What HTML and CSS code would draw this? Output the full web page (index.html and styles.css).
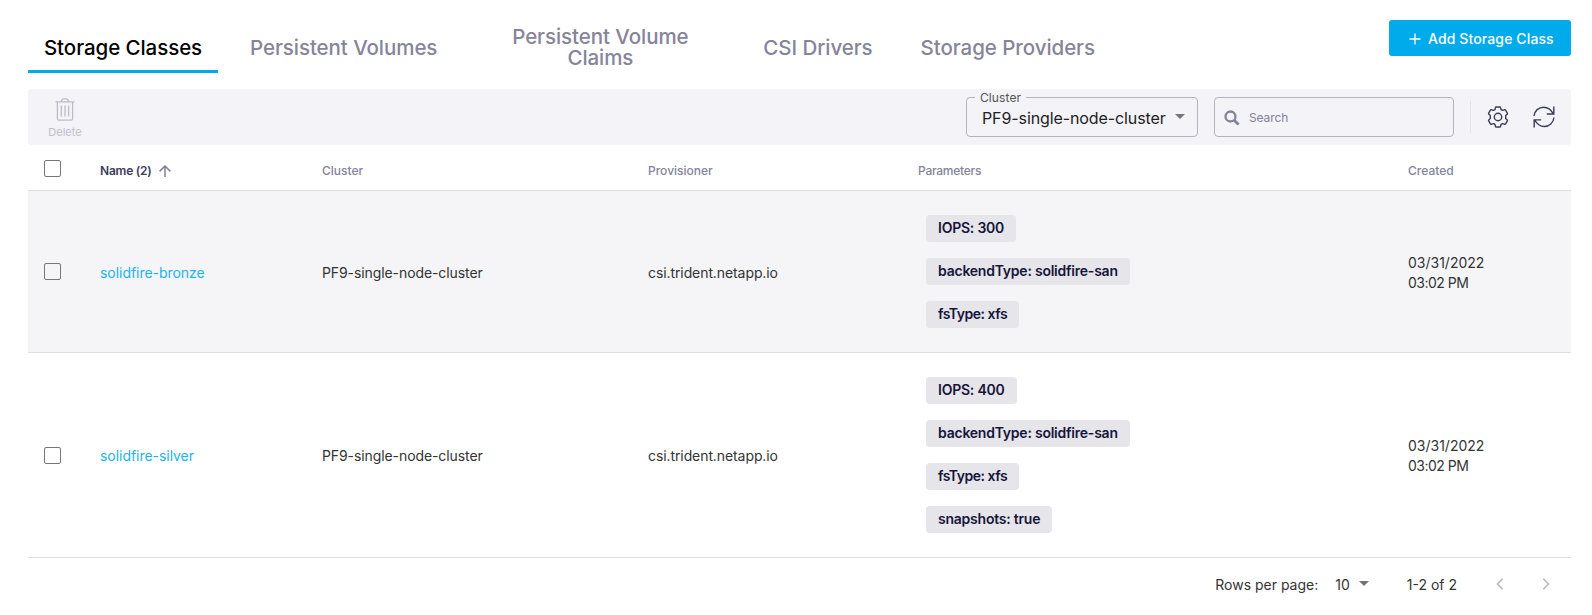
FILE: index.html
```html
<!DOCTYPE html>
<html lang="en">
<head>
<meta charset="utf-8">
<title>Storage Classes</title>
<link rel="stylesheet" href="styles.css">
</head>
<body>
<main class="page">
  <header class="top">
    <nav class="tabs">
      <a class="tab tab-active"><span>Storage Classes</span></a>
      <a class="tab"><span>Persistent Volumes</span></a>
      <a class="tab tab-wide"><span>Persistent Volume Claims</span></a>
      <a class="tab"><span>CSI Drivers</span></a>
      <a class="tab"><span>Storage Providers</span></a>
    </nav>
    <button class="add">
      <svg width="12" height="12" viewBox="0 0 12 12"><path d="M6 .5v11M.5 6h11" stroke="#fff" stroke-width="1.3" fill="none"/></svg>
      <span>Add Storage Class</span>
    </button>
  </header>

  <section class="toolbar">
    <div class="delete">
      <svg width="20" height="23" viewBox="0 0 20 23" fill="none" stroke="#bdbcc8" stroke-width="1.3"><path d="M.5 3.9h19M2.4 4v16.8q0 1.4 1.4 1.4h12.4q1.4 0 1.4-1.4V4M6 3.8l1.4-2.4Q7.8.8 8.5.8h3q.7 0 1.1.6L14 3.800M6.3 7.5v11M10 7.5v11M13.7 7.5v11"/></svg>
      <span>Delete</span>
    </div>
    <div class="tools">
      <fieldset class="select">
        <legend><span>Cluster</span></legend>
        <div class="select-value"><span>PF9-single-node-cluster</span><i class="caret"></i></div>
      </fieldset>
      <div class="search">
        <svg width="16" height="16" viewBox="0 0 16 16" fill="none" stroke="#84839a"><circle cx="6.5" cy="6.5" r="5" stroke-width="2.3"/><path d="M10.2 10.2l4.4 4.4" stroke-width="2.8"/></svg>
        <span>Search</span>
      </div>
      <div class="divider"></div>
      <svg class="gear" width="22" height="22" viewBox="0 0 22 22" fill="none" stroke="#3d3b5c" stroke-width="1.4" stroke-linejoin="round"><path d="M8.4 1.7Q8.5 1 9.300 1h3.400q.8 0 .9.7l.4 1.900 1.500.8 1.900-.6q.8-.2 1.200.4l1.700 2.900q.4.700-.2 1.200l-1.400 1.300v2.800l1.400 1.300q.6.500.2 1.200l-1.700 2.900q-.4.600-1.200.4l-1.900-.6-1.500.8-.4 1.900q-.1.700-.9.700H9.300q-.8 0-.9-.7L8 18.400l-1.500-.8-1.900.6q-.8.200-1.200-.4l-1.700-2.900q-.4-.7.200-1.200l1.400-1.300V9.600L1.900 8.300q-.6-.5-.2-1.200l1.700-2.900q.4-.6 1.200-.4l1.900.6L8 3.600z"/><circle cx="11" cy="11" r="3.700"/></svg>
      <svg class="refresh" width="22" height="22" viewBox="0 0 22 22" fill="none" stroke="#3d3b5c" stroke-width="1.4"><path d="M1 10C1.500 4.700 5.700 1.200 10.800 1.200c4.100 0 7.200 2.400 9.600 6.600M13.800 8h7V.5M21 11.500c-.6 5.200-4.700 9-9.800 9-4.100 0-7.200-2.300-9.500-6.500M8.200 13.900H1.200v7.600"/></svg>
    </div>
  </section>

  <section class="table">
    <div class="row head">
      <div><i class="check"></i></div>
      <div class="sorted"><span>Name (2)</span><svg width="12" height="12" viewBox="0 0 12 12" fill="none" stroke="#84839a" stroke-width="1.5"><path d="M6 12V1M.6 6.400L6 1l5.400 5.400"/></svg></div>
      <div>Cluster</div>
      <div>Provisioner</div>
      <div class="params">Parameters</div>
      <div>Created</div>
    </div>
    <div class="row shaded">
      <div><i class="check"></i></div>
      <div class="body-text"><a class="link">solidfire-bronze</a></div>
      <div class="body-text">PF9-single-node-cluster</div>
      <div class="body-text">csi.trident.netapp.io</div>
      <div class="chips"><span>IOPS: 300</span><span>backendType: solidfire-san</span><span class="tight">fsType: xfs</span></div>
      <div class="date">03/31/2022<br><span class="time">03:02 PM</span></div>
    </div>
    <div class="row">
      <div><i class="check"></i></div>
      <div class="body-text"><a class="link">solidfire-silver</a></div>
      <div class="body-text">PF9-single-node-cluster</div>
      <div class="body-text">csi.trident.netapp.io</div>
      <div class="chips"><span>IOPS: 400</span><span>backendType: solidfire-san</span><span class="tight">fsType: xfs</span><span>snapshots: true</span></div>
      <div class="date">03/31/2022<br><span class="time">03:02 PM</span></div>
    </div>
  </section>

  <footer class="pager">
    <span>Rows per page:</span>
    <span class="count">10</span><i class="caret"></i>
    <span class="range">1-2 of 2</span>
    <svg width="8" height="12" viewBox="0 0 8 12" fill="none" stroke="#b9b9b9" stroke-width="1.6"><path d="M6.700 .8L1.500 6l5.200 5.200"/></svg>
    <svg class="next" width="8" height="12" viewBox="0 0 8 12" fill="none" stroke="#b9b9b9" stroke-width="1.6"><path d="M1.300 .8L6.500 6l-5.200 5.200"/></svg>
  </footer>
</main>
</body>
</html>
```
FILE: styles.css
```css
* { box-sizing: border-box; }
body { margin: 0; background: #fff; font: 14px/20px Inter, "Liberation Sans", sans-serif; color: #333; }
svg { display: block; flex: none; }
.page { padding: 20px 21px 0 28px; }
.top { display: flex; justify-content: space-between; align-items: flex-start; height: 69px; }
.tabs { display: flex; gap: 16px; }
.tab { height: 53px; padding: 4px 16px 0; display: flex; align-items: center; justify-content: center; text-align: center; font-size: 20.5px; font-weight: 550; letter-spacing: -.06px; line-height: 21px; color: #868499; border-bottom: 3px solid transparent; white-space: nowrap; }
.tab-active { width: 190px; color: #000; border-color: #00abeb; }
.tab-wide { width: 262px; white-space: normal; }
.tab-wide span { width: 190px; }
.add { width: 182px; height: 36px; border: 0; border-radius: 3px; background: #00abeb; color: #fff; font: 500 14px/20px Inter, sans-serif; letter-spacing: .12px; display: flex; align-items: center; padding: 2px 0 0 20px; gap: 7px; }

.toolbar { height: 56px; border-radius: 4px; background: #f3f3f8; display: flex; justify-content: space-between; padding-left: 20px; }
.delete { width: 34px; padding-top: 9px; display: flex; flex-direction: column; align-items: center; color: #bfbecb; font-size: 11px; line-height: 14px; gap: 4px; }
.tools { display: flex; align-items: center; padding-right: 16px; }
.select { width: 232px; height: 45px; margin: -5px 16px 0 0; padding: 0 12px 0 15px; border: 1px solid #b5b4bf; border-radius: 4px; min-width: 0; }
.select legend { margin-left: -7px; padding: 0 5px; font-size: 12px; line-height: 12px; height: 10px; letter-spacing: .1px; color: #555; }
.select-value { display: flex; align-items: center; justify-content: space-between; font-size: 16px; letter-spacing: -.1px; line-height: 20px; padding-top: 6px; color: #222; }
.select .caret { margin-top: -4px; }
.caret { border: 5px solid transparent; border-top-color: #757575; border-bottom: 0; width: 0; height: 0; }
.search { width: 240px; height: 40px; border: 1px solid #b5b4bf; border-radius: 4px; display: flex; align-items: center; gap: 9px; padding: 1px 0 0 9px; font-size: 12px; color: #84839a; letter-spacing: -.1px; }
.divider { width: 1px; height: 32px; margin: 0 16px; background: #e3e3ea; }
.refresh { margin-left: 24px; }

.row { display: grid; grid-template-columns: 56px 222px 326px 270px 490px 1fr; align-items: center; border-bottom: 1px solid #dedede; }
.row > div { padding-left: 16px; }
.shaded { background: #f5f5f8; }
.head { height: 46px; color: #84839a; font-size: 12px; font-weight: 500; padding-top: 7px; }
.head .check { margin-top: -5px; }
.head .params { letter-spacing: -.25px; }
.row > .sorted { display: flex; align-items: center; gap: 7px; color: #3d3b5c; font-weight: 600; letter-spacing: -.22px; }
.check { display: block; width: 17px; height: 17px; border: 1.5px solid #777; border-radius: 2px; }
.link { color: #1bb4ec; }
.row > .body-text { padding-top: 2px; letter-spacing: -.09px; }
.link { letter-spacing: -.04px; }
.row > .date { padding-top: 2px; }
.date .time { letter-spacing: -.5px; }
.row > .chips { display: flex; flex-direction: column; align-items: flex-start; gap: 16px; padding: 24px; }
.chips span { height: 27px; line-height: 26px; padding: 0 12px; border-radius: 4px; background: #e5e5ea; color: #17163a; font-weight: 600; letter-spacing: -.23px; }
.chips .tight { letter-spacing: -.48px; }

.pager { display: flex; align-items: center; justify-content: flex-end; height: 54px; padding-right: 21px; }
.count { margin-left: 17px; }
.pager .caret { margin: -3px 38px 0 9px; }
.range { margin-right: 39px; }
.pager svg { margin-top: -3px; }
.next { margin-left: 38px; }
```
